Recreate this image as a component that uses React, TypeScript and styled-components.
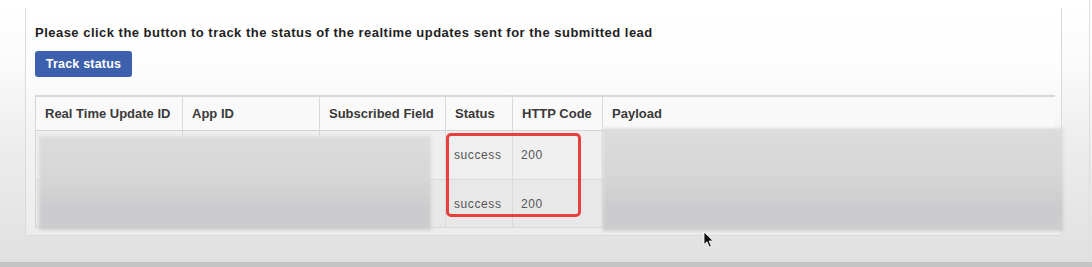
import React from "react";
import styled, { createGlobalStyle } from "styled-components";

const GlobalStyle = createGlobalStyle`
  html, body {
    margin: 0;
    padding: 0;
  }
  body {
    font-family: "Liberation Sans", Arial, sans-serif;
    background: #e4e4e4;
  }
`;

type Update = { status: string; code: number };

const columns = [
  { title: "Real Time Update ID", width: 147 },
  { title: "App ID", width: 137 },
  { title: "Subscribed Field", width: 126 },
  { title: "Status", width: 67 },
  { title: "HTTP Code", width: 90 },
  { title: "Payload", width: 452 },
];

const updates: Update[] = [
  { status: "success", code: 200 },
  { status: "success", code: 200 },
];

export default function App() {
  return (
    <>
      <GlobalStyle />
      <Page>
        <Frame>
          <Panel>
            <Intro>
              Please click the button to track the status of the realtime updates sent for the submitted lead
            </Intro>
            <TrackButton>Track status</TrackButton>
            <TableWrap>
              <Table>
                <colgroup>
                  {columns.map((c) => (
                    <col key={c.title} style={{ width: c.width }} />
                  ))}
                </colgroup>
                <thead>
                  <tr>
                    {columns.map((c) => (
                      <HeadCell key={c.title}>{c.title}</HeadCell>
                    ))}
                  </tr>
                </thead>
                <tbody>
                  {updates.map((u, i) => (
                    <BodyRow key={i} $shade={i % 2 === 1}>
                      <Cell />
                      <Cell />
                      <Cell />
                      <Cell>{u.status}</Cell>
                      <Cell>{u.code}</Cell>
                      <Cell />
                    </BodyRow>
                  ))}
                </tbody>
              </Table>
              <Redacted $left={4} $top={41} $width={392} $height={94} />
              <Redacted $left={568} $top={33} $width={460} $height={103} />
              <Highlight />
              <Cursor viewBox="0 0 12 17">
                <path
                  d="M1 1 L1 13.5 L4 10.8 L6.3 16 L8.3 15.1 L6.1 10 L10.2 10 Z"
                  fill="#111"
                  stroke="#fff"
                  strokeWidth="0.8"
                  strokeLinejoin="round"
                />
              </Cursor>
            </TableWrap>
          </Panel>
        </Frame>
        <BottomStrip />
      </Page>
    </>
  );
}

const Page = styled.div`
  width: 1092px;
  height: 267px;
  overflow: hidden;
  display: flex;
  flex-direction: column;
  background: linear-gradient(#ffffff 0px, #fbfbfb 60px, #ececec 150px, #e3e3e3 240px, #e1e1e1 262px);
`;

const Frame = styled.div`
  flex: 1;
  width: 1090px;
  padding: 8px 0 0 25px;
  box-sizing: border-box;
  border-right: 1px solid #dedede;
`;

const Panel = styled.div`
  width: 1037px;
  height: 228px;
  box-sizing: border-box;
  padding: 17px 9px 0 9px;
  border: 1px solid #dadada;
  border-top: none;
  border-radius: 0 0 3px 3px;
  background: linear-gradient(#ffffff 0px, #fdfdfd 60px, #f3f3f3 130px, #ececec 228px);
`;

const Intro = styled.div`
  font-size: 13px;
  line-height: 16px;
  font-weight: 700;
  color: #1f1f1f;
  letter-spacing: 0.48px;
  white-space: nowrap;
`;

const TrackButton = styled.button`
  display: block;
  margin-top: 10px;
  width: 97px;
  height: 26px;
  padding: 0;
  border: none;
  border-radius: 3px;
  background: #3d60ad;
  color: #ffffff;
  font-family: "Liberation Sans", Arial, sans-serif;
  font-size: 12.5px;
  font-weight: 700;
  letter-spacing: 0.2px;
`;

const TableWrap = styled.div`
  position: relative;
  margin-top: 18px;
  width: 1019px;
`;

const Table = styled.table`
  width: 1019px;
  table-layout: fixed;
  border-collapse: collapse;
  border-top: 2px solid #d6d6d6;
  border-left: 1px solid #d6d6d6;
`;

const HeadCell = styled.th`
  height: 33px;
  padding: 0 0 0 9px;
  text-align: left;
  font-size: 13px;
  font-weight: 700;
  color: #3a3a3a;
  background: #f9f9f9;
  border-right: 1px solid #d9d9d9;
  border-bottom: 1px solid #d4d4d4;
  white-space: nowrap;

  &:last-child {
    border-right: none;
  }
`;

const BodyRow = styled.tr<{ $shade: boolean }>`
  height: ${(p) => (p.$shade ? 48 : 49)}px;
  background: ${(p) => (p.$shade ? "#e8e8e8" : "#efefef")};
  border-bottom: 1px solid #d9d9d9;
`;

const Cell = styled.td`
  padding: 0 0 0 8px;
  font-size: 12px;
  letter-spacing: 0.6px;
  color: #555555;
  border-right: 1px solid #dadada;
  vertical-align: middle;

  &:last-child {
    border-right: none;
  }
`;

const Redacted = styled.div<{ $left: number; $top: number; $width: number; $height: number }>`
  position: absolute;
  left: ${(p) => p.$left}px;
  top: ${(p) => p.$top}px;
  width: ${(p) => p.$width}px;
  height: ${(p) => p.$height}px;
  background: linear-gradient(#dcdcdc 0%, #d6d6d6 45%, #cbcbce 80%, #cdcdd0 100%);
  filter: blur(1.5px);
`;

const Highlight = styled.div`
  position: absolute;
  left: 411px;
  top: 38px;
  width: 135px;
  height: 84px;
  box-sizing: border-box;
  border: 3px solid #e8403f;
  border-radius: 5px;
`;

const Cursor = styled.svg`
  position: absolute;
  left: 668px;
  top: 136px;
  width: 12px;
  height: 17px;
`;

const BottomStrip = styled.div`
  height: 5px;
  background: #c4c4c4;
`;
